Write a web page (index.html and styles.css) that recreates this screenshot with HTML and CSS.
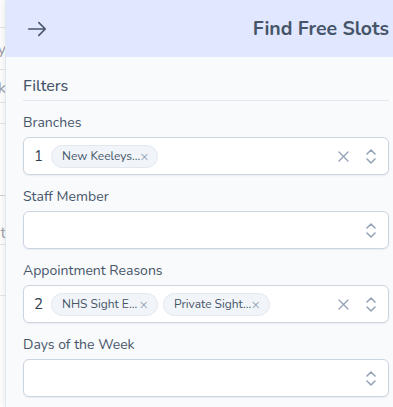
FILE: index.html
```html
<!DOCTYPE html>
<html lang="en">
<head>
    <meta charset="UTF-8">
    <meta name="viewport" content="width=device-width, initial-scale=1.0">
    <title>Find Free Slots</title>
    <link rel="stylesheet" href="styles.css">
</head>
<body>
    <!-- page behind the drawer -->
    <div class="page">
        <div class="page-row r1"><span></span></div>
        <div class="page-row r2"><span>Today</span></div>
        <div class="page-row r3"><span>Week</span></div>
        <div class="page-row r4"><span></span></div>
        <div class="page-row r5"><span></span></div>
        <div class="page-row r6"><span>Edit</span></div>
        <div class="page-row r7"><span></span></div>
    </div>

    <div class="drawer">
        <div class="drawer-header">
            <button class="close-btn" type="button">
                <svg width="22" height="22" viewBox="0 0 24 24" fill="none" stroke="currentColor" stroke-width="1.8" stroke-linecap="round" stroke-linejoin="round">
                    <path d="M3 12h18M14 5l7 7-7 7"/>
                </svg>
            </button>
            <h2>Find Free Slots</h2>
        </div>

        <div class="drawer-body">
            <h3 class="section-title">Filters</h3>

            <div class="field">
                <label>Branches</label>
                <div class="select">
                    <span class="count">1</span>
                    <span class="chip">New Keeleys... <i>&times;</i></span>
                    <span class="spacer"></span>
                    <svg class="clear" width="11" height="11" viewBox="0 0 11 11" fill="none" stroke="currentColor" stroke-width="1.4" stroke-linecap="round"><path d="M1 1l9 9M10 1L1 10"/></svg>
                    <svg class="updown" width="10" height="15" viewBox="0 0 10 15" fill="none" stroke="currentColor" stroke-width="1.6" stroke-linecap="round" stroke-linejoin="round"><path d="M1 5l4-4 4 4M1 10l4 4 4-4"/></svg>
                </div>
            </div>

            <div class="field">
                <label>Staff Member</label>
                <div class="select">
                    <span class="spacer"></span>
                    <svg class="updown" width="10" height="15" viewBox="0 0 10 15" fill="none" stroke="currentColor" stroke-width="1.6" stroke-linecap="round" stroke-linejoin="round"><path d="M1 5l4-4 4 4M1 10l4 4 4-4"/></svg>
                </div>
            </div>

            <div class="field">
                <label>Appointment Reasons</label>
                <div class="select">
                    <span class="count">2</span>
                    <span class="chip">NHS Sight E... <i>&times;</i></span>
                    <span class="chip">Private Sight... <i>&times;</i></span>
                    <span class="spacer"></span>
                    <svg class="clear" width="11" height="11" viewBox="0 0 11 11" fill="none" stroke="currentColor" stroke-width="1.4" stroke-linecap="round"><path d="M1 1l9 9M10 1L1 10"/></svg>
                    <svg class="updown" width="10" height="15" viewBox="0 0 10 15" fill="none" stroke="currentColor" stroke-width="1.6" stroke-linecap="round" stroke-linejoin="round"><path d="M1 5l4-4 4 4M1 10l4 4 4-4"/></svg>
                </div>
            </div>

            <div class="field">
                <label>Days of the Week</label>
                <div class="select">
                    <span class="spacer"></span>
                    <svg class="updown" width="10" height="15" viewBox="0 0 10 15" fill="none" stroke="currentColor" stroke-width="1.6" stroke-linecap="round" stroke-linejoin="round"><path d="M1 5l4-4 4 4M1 10l4 4 4-4"/></svg>
                </div>
            </div>
        </div>
    </div>
</body>
</html>
```

FILE: styles.css
```css
* {
    box-sizing: border-box;
}
body {
    margin: 0;
    font-family: Nunito, Lato, 'Open Sans', sans-serif;
    background-color: #ffffff;
    color: #475569;
    height: 407px;
    overflow: hidden;
}

/* background page */
.page {
    width: 393px;
}
.page-row {
    display: flex;
    justify-content: flex-end;
    width: 6px;
    overflow: hidden;
    border-bottom: 1px solid #e5e7eb;
    font-size: 16px;
    color: #a1a1aa;
    white-space: nowrap;
}
.page-row span {
    flex-shrink: 0;
}
.r1 { height: 28px; }
.r2 { height: 42px; align-items: center; }
.r3 { height: 33px; align-items: center; padding-top: 3px; }
.r4 { height: 21px; }
.r5 { height: 72px; border-bottom-color: #d1d5db; }
.r6 { height: 49px; align-items: flex-end; }
.r7 { height: 51px; }

/* drawer */
.drawer {
    position: absolute;
    top: 0;
    left: 5px;
    right: 0;
    height: 407px;
    background-color: #f8fafc;
    border-left: 1px solid #e2e8f0;
    box-shadow: -2px 0 6px rgba(15, 23, 42, 0.08);
}
.drawer-header {
    height: 57px;
    background-color: #e0e7ff;
    display: flex;
    align-items: center;
    justify-content: space-between;
    padding: 0 4px 0 20px;
}
.close-btn {
    background: none;
    border: none;
    padding: 0;
    color: #475569;
    display: flex;
    cursor: pointer;
}
.drawer-header h2 {
    margin: 0;
    font-size: 19.5px;
    font-weight: 700;
    color: #475569;
}
.drawer-body {
    padding: 18px 4px 0 17px;
}
.section-title {
    margin: 0 0 12px;
    font-size: 16px;
    font-weight: 500;
    color: #475569;
    padding-bottom: 3px;
    border-bottom: 1px solid #e2e8f0;
}
.field {
    margin-bottom: 12px;
}
.field label {
    display: block;
    font-size: 14px;
    line-height: 20px;
    margin-bottom: 4px;
    color: #475569;
}
.select {
    height: 38px;
    background-color: #ffffff;
    border: 1px solid #cbd5e1;
    border-radius: 6px;
    box-shadow: 0 1px 2px rgba(15, 23, 42, 0.06);
    display: flex;
    align-items: center;
    gap: 5px;
    padding: 0 12px 0 10px;
}
.count {
    font-size: 15px;
    color: #334155;
    margin-right: 3px;
}
.chip {
    display: flex;
    align-items: center;
    height: 23px;
    width: 107px;
    padding: 0 9px 0 10px;
    border-radius: 12px;
    background-color: #f1f5f9;
    border: 1px solid #e2e8f0;
    font-size: 12px;
    color: #475569;
    white-space: nowrap;
}
.chip i {
    font-style: normal;
    color: #94a3b8;
    margin-left: auto;
    font-size: 14px;
}
.spacer {
    flex-grow: 1;
}
.clear {
    color: #94a3b8;
    margin-right: 12px;
}
.updown {
    color: #94a3b8;
}
```
